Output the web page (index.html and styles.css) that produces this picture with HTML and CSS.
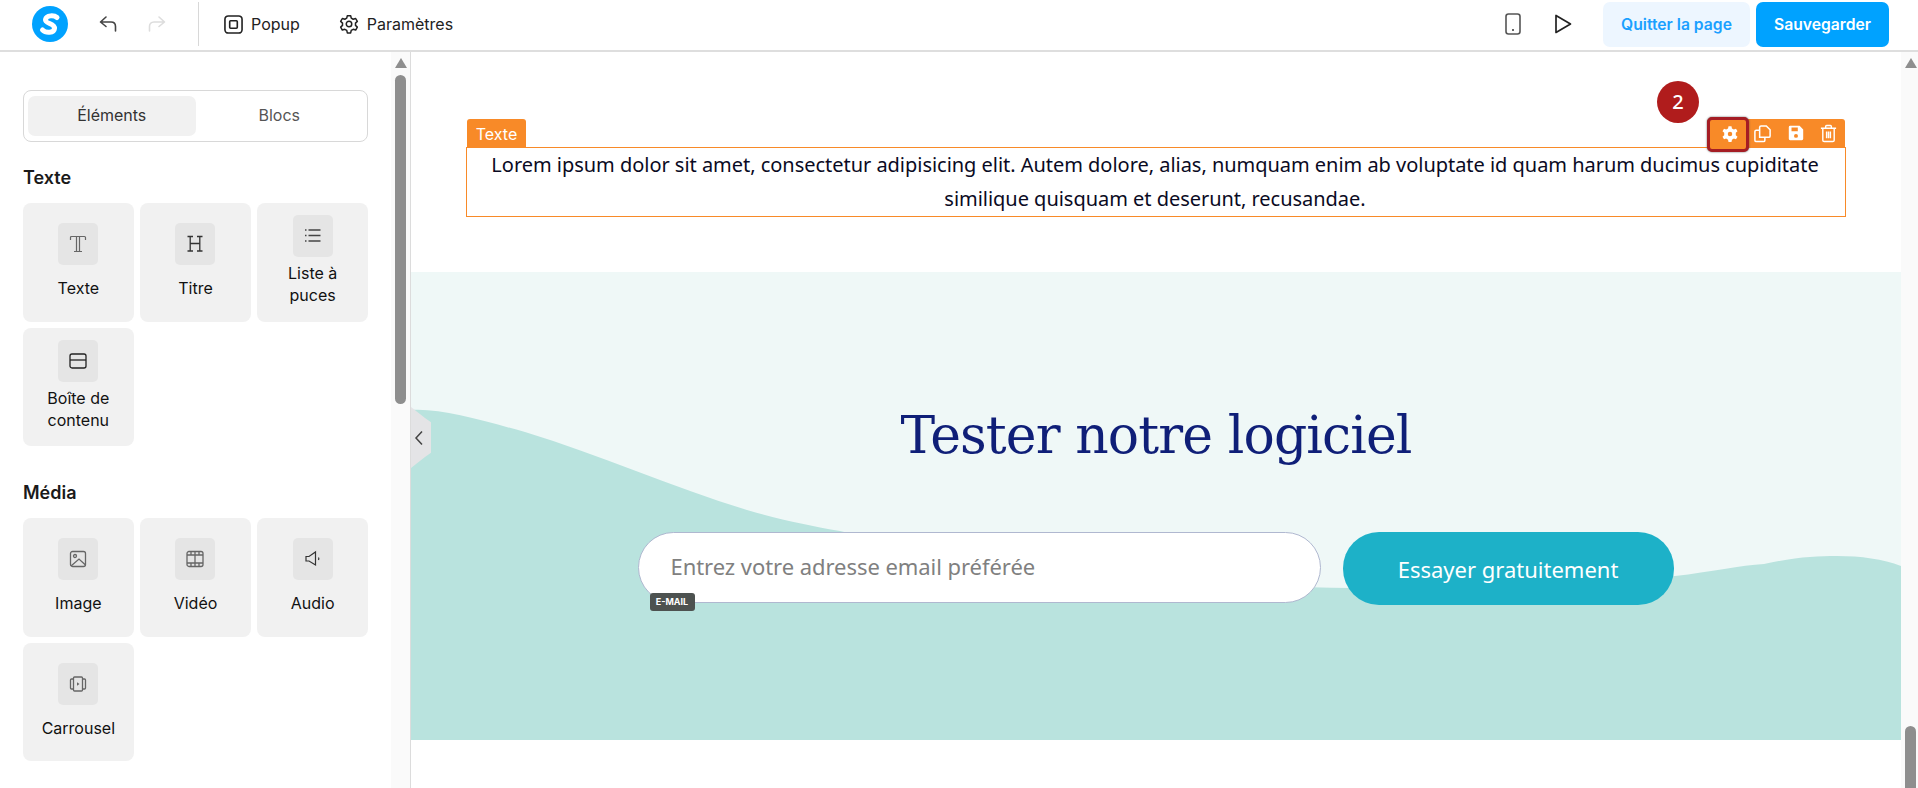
FILE: index.html
```html
<!DOCTYPE html>
<html lang="fr">
<head>
<meta charset="utf-8">
<title>Éditeur</title>
<link rel="stylesheet" href="styles.css">
</head>
<body>
<header class="topbar">
  <div class="bar-left">
    <svg class="logo" viewBox="0 0 36 36" width="36" height="36"><circle cx="18" cy="18" r="18" fill="#00a2ff"/><path d="M25 11.500C22 9 14.500 9 13.500 13.500C12.800 18 23 17 22.500 22.500C22 27 14 27.500 10.500 24" fill="none" stroke="#fff" stroke-width="5" stroke-linecap="round"/></svg>
    <svg class="undo" viewBox="0 0 20 20" width="20" height="20"><path d="M8 3L2.500 8L8 12.500M3 8H13C16 8 17.500 10 17.500 12.500V17" fill="none" stroke="#444" stroke-width="1.600" stroke-linecap="round" stroke-linejoin="round"/></svg>
    <svg class="redo" viewBox="0 0 20 20" width="20" height="20"><path d="M12 3L17.500 8L12 12.500M17 8H7C4 8 2.500 10 2.500 12.500V17" fill="none" stroke="#ddd" stroke-width="1.600" stroke-linecap="round" stroke-linejoin="round"/></svg>
    <span class="divider"></span>
    <div class="tool tool-popup">
      <svg viewBox="0 0 20 20" width="19" height="19"><rect x="1" y="1" width="18" height="18" rx="3.500" fill="none" stroke="#222" stroke-width="1.700"/><rect x="6" y="6" width="8" height="8" rx="1" fill="none" stroke="#222" stroke-width="1.700"/></svg>
      <span>Popup</span>
    </div>
    <div class="tool">
      <svg viewBox="0 0 24 24" width="20" height="20" fill="none" stroke="#222" stroke-width="1.800" stroke-linejoin="round"><path d="M10 2h4l.7 3 2.300 1.300 3-.9 2 3.500-2.200 2.100v2.700l2.200 2.100-2 3.500-3-.9-2.300 1.300-.7 3h-4l-.7-3L7 18.400l-3 .9-2-3.500 2.200-2.100v-2.700L2 8.900l2-3.500 3 .9 2.300-1.300z"/><circle cx="12" cy="12" r="3.300"/></svg>
      <span>Paramètres</span>
    </div>
  </div>
  <div class="bar-right">
    <svg class="phone" viewBox="0 0 16 22" width="16" height="22"><rect x="1" y="1" width="14" height="20" rx="2.500" fill="none" stroke="#555" stroke-width="1.600"/><circle cx="8" cy="17" r="1" fill="#333"/></svg>
    <svg class="play" viewBox="0 0 18 20" width="18" height="20"><path d="M2 1.500V18.500L16.500 10Z" fill="none" stroke="#222" stroke-width="1.700" stroke-linejoin="round"/></svg>
    <button class="btn btn-soft">Quitter la page</button>
    <button class="btn btn-solid">Sauvegarder</button>
  </div>
</header>

<main class="workspace">
  <aside class="sidebar">
    <div class="panel">
      <div class="tabs">
        <div class="tab tab-active">Éléments</div>
        <div class="tab">Blocs</div>
      </div>

      <h2 class="group-title group-first">Texte</h2>
      <div class="cards">
        <div class="card">
          <div class="card-icon"><svg viewBox="0 0 20 20" width="20" height="20" fill="none" stroke="#666" stroke-width="1.200"><path d="M2.500 6V3.500Q2.500 2.500 3.500 2.500H16.500Q17.500 2.500 17.500 3.500V6M8.500 2.500V17.500M11.500 2.500V17.500M6 17.500H14"/></svg></div>
          <div class="card-label">Texte</div>
        </div>
        <div class="card">
          <div class="card-icon"><svg viewBox="0 0 20 20" width="20" height="20" fill="none" stroke="#333" stroke-width="1.300"><path d="M2.500 2.500H8M12 2.500H17.500M2.500 17H8M12 17H17.500M5.200 2.500V17M14.800 2.500V17M5.200 9.500H14.800"/></svg></div>
          <div class="card-label">Titre</div>
        </div>
        <div class="card card-tall">
          <div class="card-icon"><svg viewBox="0 0 20 20" width="20" height="20" fill="none" stroke="#444" stroke-width="1.500"><path d="M5.500 4H17.500M5.500 9.500H17.500M5.500 15H17.500M2 4H3.500M2 9.500H3.500M2 15H3.500"/></svg></div>
          <div class="card-label">Liste à puces</div>
        </div>
        <div class="card card-tall">
          <div class="card-icon"><svg viewBox="0 0 20 20" width="20" height="20" fill="none" stroke="#222" stroke-width="1.300"><rect x="2" y="3" width="16" height="14" rx="2"/><path d="M2 9H18"/></svg></div>
          <div class="card-label">Boîte de contenu</div>
        </div>
      </div>

      <h2 class="group-title">Média</h2>
      <div class="cards">
        <div class="card">
          <div class="card-icon"><svg viewBox="0 0 20 20" width="20" height="20" fill="none" stroke="#666" stroke-width="1.300"><rect x="2.500" y="2.500" width="15" height="15" rx="2"/><circle cx="7" cy="7" r="1.500"/><path d="M3 17L11 10L17.500 16"/></svg></div>
          <div class="card-label">Image</div>
        </div>
        <div class="card">
          <div class="card-icon"><svg viewBox="0 0 20 20" width="20" height="20" fill="none" stroke="#666" stroke-width="1.300"><rect x="2" y="2.500" width="16" height="15" rx="2"/><path d="M2 6H18M2 14H18M10 2.500V17.500M6 2.500V6M14 2.500V6M6 14V17.500M14 14V17.500"/></svg></div>
          <div class="card-label">Vidéo</div>
        </div>
        <div class="card">
          <div class="card-icon"><svg viewBox="0 0 20 20" width="20" height="20" fill="none" stroke="#333" stroke-width="1.200"><path d="M3 7.500H6L12.500 3V16L6 12H3ZM15.500 8.500C16 9.300 16 10 15.500 11"/></svg></div>
          <div class="card-label">Audio</div>
        </div>
        <div class="card">
          <div class="card-icon"><svg viewBox="0 0 20 20" width="20" height="20" fill="none" stroke="#666" stroke-width="1.300"><rect x="5.500" y="3" width="9" height="14" rx="1"/><path d="M5.500 5H3.500Q2.500 5 2.500 6V14Q2.500 15 3.500 15H5.500M14.500 5H16.500Q17.500 5 17.500 6V14Q17.500 15 16.500 15H14.500"/><path d="M9 8.300V11.700L11.500 10Z" fill="#666" stroke="none"/></svg></div>
          <div class="card-label">Carrousel</div>
        </div>
      </div>
    </div>
    <div class="scroll-track">
      <span class="scroll-arrow"></span>
      <span class="scroll-thumb scroll-thumb-side"></span>
    </div>
  </aside>

  <section class="canvas">
    <span class="collapse"><svg viewBox="0 0 10 16" width="10" height="16"><path d="M8 1.500L2 8L8 14.500" fill="none" stroke="#444" stroke-width="1.500"/></svg></span>
    <div class="text-block">
      <span class="block-tag">Texte</span>
      <span class="step-badge">2</span>
      <div class="block-tools">
        <span class="tool-btn tool-btn-on"><svg viewBox="0 0 24 24" width="18" height="18"><path fill="#fff" fill-rule="evenodd" d="M10 1.500h4l.6 3 2.500 1.400 2.900-1 2 3.500-2.300 2v3.200l2.300 2-2 3.500-2.900-1-2.500 1.400-.6 3h-4l-.6-3-2.500-1.400-2.900 1-2-3.500 2.300-2v-3.200l-2.300-2 2-3.500 2.900 1 2.500-1.400zM12 9a3 3 0 1 0 0 6 3 3 0 0 0 0-6z"/></svg></span>
        <span class="tool-btn"><svg viewBox="0 0 20 20" width="19" height="19" fill="none" stroke="#fff" stroke-width="1.600"><path d="M7 14V3.500Q7 2 8.500 2H14L18 6V12.500Q18 14 16.500 14Z"/><path d="M7 6.500H3.500Q2 6.500 2 8V17Q2 18.500 3.500 18.500H11Q12.500 18.500 12.500 17V14"/></svg></span>
        <span class="tool-btn"><svg viewBox="0 0 20 20" width="18" height="18"><path fill="#fff" fill-rule="evenodd" d="M3.500 2H14L18 6V16.500Q18 18 16.500 18H3.500Q2 18 2 16.500V3.500Q2 2 3.500 2ZM5 4V8H12V4ZM10 11a2.200 2.200 0 1 0 0 4.400 2.200 2.200 0 0 0 0-4.400Z"/></svg></span>
        <span class="tool-btn"><svg viewBox="0 0 20 20" width="19" height="19" fill="none" stroke="#fff" stroke-width="1.500"><path d="M2 4.500H18M7 4.500V2.500Q7 1.500 8 1.500H12Q13 1.500 13 2.500V4.500M4 4.500V17Q4 18.500 5.500 18.500H14.500Q16 18.500 16 17V4.500M8 8V15M10 8V15M12 8V15"/></svg></span>
      </div>
      <p class="lorem">Lorem ipsum dolor sit amet, consectetur adipisicing elit. Autem dolore, alias, numquam enim ab voluptate id quam harum ducimus cupiditate similique quisquam et deserunt, recusandae.</p>
    </div>

    <div class="hero">
      <svg class="wave" viewBox="0 0 1490 468" preserveAspectRatio="none"><path d="M0 138C30 136 70 148 114 160C190 183 260 215 336 238C370 248 400 254 429 259C560 290 780 315 940 316C1060 316 1180 316 1264 304C1300 300 1330 293 1353 292C1385 285 1405 284 1426 284C1450 284 1472 287 1490 294V468H0Z" fill="#b9e3de"/></svg>
      <h1 class="hero-title">Tester notre logiciel</h1>
      <form class="signup">
        <div class="field">
          <span class="placeholder">Entrez votre adresse email préférée</span>
          <span class="field-tag">E-MAIL</span>
        </div>
        <button class="cta" type="button">Essayer gratuitement</button>
      </form>
    </div>
  </section>

  <div class="scroll-track scroll-track-main">
    <span class="scroll-arrow"></span>
    <span class="scroll-thumb scroll-thumb-main"></span>
  </div>
</main>
</body>
</html>
```

FILE: styles.css
```css
* { box-sizing: border-box; }
html, body { margin: 0; height: 100%; overflow: hidden; }
body { font-family: Inter, "Liberation Sans", sans-serif; color: #111; background: #fff; display: flex; flex-direction: column; }

.topbar { height: 52px; flex: none; display: flex; justify-content: space-between; align-items: center; border-bottom: 2px solid #dedede; background: #fff; padding: 0 29px 2px 32px; }
.bar-left, .bar-right { display: flex; align-items: center; }
.logo { display: block; }
.undo { margin-left: 30px; }
.redo { margin-left: 29px; }
.divider { width: 1px; height: 44px; background: #d8d8d8; margin-left: 31px; }
.tool { display: flex; align-items: center; gap: 8px; font-size: 16px; font-weight: 400; color: #222; margin-left: 39px; }
.tool-popup { margin-left: 25px; }
.phone { margin-right: 33px; }
.play { margin-right: 31px; }
.btn { border: 0; height: 45px; border-radius: 7px; font-family: inherit; font-size: 15.7px; font-weight: 600; padding: 0; }
.btn-soft { width: 147px; background: #edf6ff; color: #1ba0ff; margin-right: 6px; }
.btn-solid { width: 133px; background: #00a2ff; color: #fff; }

.workspace { flex: 1; display: flex; min-height: 0; }
.sidebar { width: 411px; flex: none; display: flex; border-right: 1px solid #dcdcdc; }
.panel { flex: 1; padding: 38px 23px 0; }
.tabs { height: 52px; display: flex; border: 1px solid #d8d8d8; border-radius: 8px; padding: 5px 4px; }
.tab { flex: 1; display: flex; align-items: center; justify-content: center; font-size: 16px; color: #555; border-radius: 7px; padding-bottom: 2px; }
.tab-active { background: #f1f1f1; color: #333; }
.group-title { font-size: 18px; line-height: 24px; font-weight: 600; color: #1a1a1a; margin: 35px 0 13px; }
.group-first { margin-top: 24px; }
.cards { display: grid; grid-template-columns: repeat(3, 1fr); grid-auto-rows: 118.5px; gap: 6px 6.5px; }
.card { background: #f1f1f1; border-radius: 8px; display: flex; flex-direction: column; align-items: center; padding-top: 20px; gap: 12px; }
.card-tall { padding-top: 12px; gap: 5px; }
.card-icon { width: 40px; height: 42px; flex: none; border-radius: 5px; background: #e5e5e5; display: flex; align-items: center; justify-content: center; }
.card-label { font-size: 16px; line-height: 22px; text-align: center; color: #111; max-width: 96px; }

.scroll-track { width: 19px; flex: none; background: #fafafa; display: flex; flex-direction: column; align-items: center; padding-top: 6px; }
.scroll-arrow { width: 0; height: 0; border-left: 6px solid transparent; border-right: 6px solid transparent; border-bottom: 10px solid #8e8e8e; }
.scroll-thumb { width: 11px; background: #8e8e8e; border-radius: 6px; flex: none; }
.scroll-thumb-side { height: 329px; margin-top: 7px; }
.scroll-track-main { width: 17px; padding-left: 2px; }
.scroll-thumb-main { height: 70px; margin-top: 658px; }

.canvas { flex: 1; min-width: 0; position: relative; padding-top: 95px; }
.collapse { position: absolute; left: 0; top: 355px; width: 20px; height: 61px; background: #e4e4e6; clip-path: polygon(0 0, 70% 18%, 100% 25%, 100% 75%, 70% 82%, 0 100%); display: flex; align-items: center; padding-left: 3px; z-index: 2; }
.text-block { position: relative; margin: 0 55px; height: 70px; border: 1px solid #f88a28; }
.block-tag { position: absolute; left: 0; top: -29px; height: 28px; width: 59px; background: #f88a28; color: #fff; font-size: 16px; line-height: 30px; text-align: center; border-radius: 3px 3px 0 0; }
.block-tools { position: absolute; right: 0; top: -29px; height: 28px; display: flex; align-items: center; background: #f88a28; border-radius: 3px 3px 0 0; }
.tool-btn { width: 33px; height: 28px; display: flex; align-items: center; justify-content: center; }
.tool-btn-on { width: 42px; height: 35px; margin-right: -3px; padding-left: 3px; border: 3px solid #a51d24; border-radius: 5px; background: #f88a28; box-shadow: 0 0 2px #555; position: relative; top: 1px; }
.step-badge { position: absolute; right: 146px; top: -67px; width: 42px; height: 42px; border-radius: 50%; background: #b01c1c; color: #fff; font-family: "Noto Sans", sans-serif; font-size: 20px; font-weight: 500; line-height: 42px; text-align: center; }
.lorem { margin: 0; padding-right: 2px; font-family: "Noto Sans", sans-serif; font-size: 20px; letter-spacing: -0.03px; line-height: 34px; text-align: center; color: #0a0a23; }

.hero { position: relative; height: 468px; margin-top: 55px; background: #eff8f7; display: flex; flex-direction: column; align-items: center; }
.wave { position: absolute; inset: 0; width: 100%; height: 100%; }
.hero-title { position: relative; margin: 127px 0 0; font-family: "DejaVu Serif", serif; font-size: 52px; letter-spacing: -0.9px; line-height: 72px; font-weight: 400; color: #0f1f78; }
.signup { position: relative; display: flex; align-items: flex-start; gap: 22px; margin-top: 61px; margin-left: -1px; }
.field { position: relative; width: 683px; height: 71px; background: #fff; border: 1px solid #b0b8d0; border-radius: 36px; display: flex; align-items: center; padding: 0 0 3px 32px; }
.placeholder { font-family: "Noto Sans", sans-serif; font-size: 22px; letter-spacing: -0.05px; color: #808080; }
.field-tag { position: absolute; left: 11px; top: 60px; width: 45px; height: 18px; background: #4d5250; border-radius: 3px; color: #fff; font-size: 9px; font-weight: 700; line-height: 18px; text-align: center; }
.cta { width: 331px; height: 73px; border: 0; border-radius: 36px; background: #1db1c8; color: #fff; font-family: "Noto Sans", sans-serif; font-size: 22px; padding: 0; }
```
